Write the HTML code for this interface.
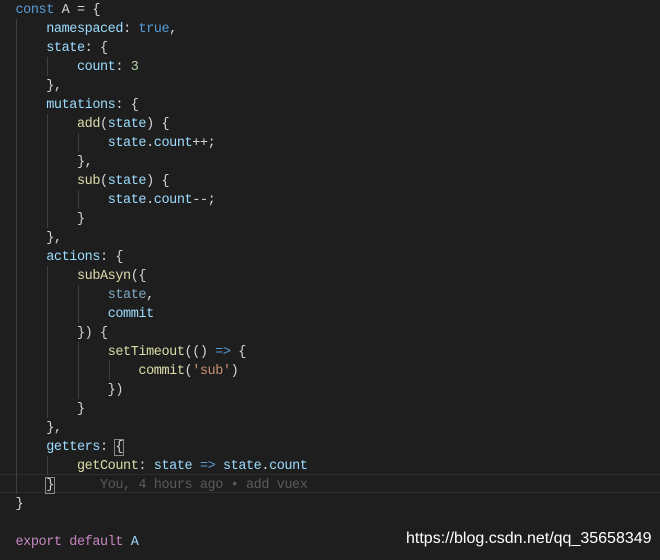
<!DOCTYPE html>
<html><head><meta charset="utf-8"><style>
html,body{margin:0;padding:0;background:#1e1e1e;width:660px;height:560px;overflow:hidden}
#c{position:absolute;left:15.5px;top:1px;font-family:"Liberation Mono",monospace;font-size:13.5px;letter-spacing:-0.42px;line-height:19px;color:#d4d4d4;white-space:pre}
.k{color:#569cd6}.p{color:#9cdcfe}.n{color:#b5cea8}.f{color:#dcdcaa}.e{color:#c586c0}.s{color:#ce9178}.d{color:#7fa9c0}.g{color:#5a5a5a}
.gd{position:absolute;width:1px;background:#404040}
.hl{position:absolute;left:0;width:660px;top:474px;height:17px;border-top:1px solid #2e2e2e;border-bottom:1px solid #2e2e2e}
.bx{outline:1px solid #888;}
#w{position:absolute;left:406px;top:530px;font-family:"Liberation Sans",sans-serif;font-size:16px;color:#fff}
</style></head><body>
<div class="hl"></div>
<div class="gd" style="left:16px;top:19px;height:475px"></div>
<div class="gd" style="left:47px;top:57px;height:19px"></div>
<div class="gd" style="left:47px;top:114px;height:114px"></div>
<div class="gd" style="left:78px;top:133px;height:19px"></div>
<div class="gd" style="left:78px;top:190px;height:19px"></div>
<div class="gd" style="left:47px;top:266px;height:152px"></div>
<div class="gd" style="left:78px;top:285px;height:38px"></div>
<div class="gd" style="left:78px;top:342px;height:57px"></div>
<div class="gd" style="left:109px;top:361px;height:19px"></div>
<div class="gd" style="left:47px;top:456px;height:19px"></div>
<div id="c"><span class="k">const</span> A = {
    <span class="p">namespaced</span>: <span class="k">true</span>,
    <span class="p">state</span>: {
        <span class="p">count</span>: <span class="n">3</span>
    },
    <span class="p">mutations</span>: {
        <span class="f">add</span>(<span class="p">state</span>) {
            <span class="p">state</span>.<span class="p">count</span>++;
        },
        <span class="f">sub</span>(<span class="p">state</span>) {
            <span class="p">state</span>.<span class="p">count</span>--;
        }
    },
    <span class="p">actions</span>: {
        <span class="f">subAsyn</span>({
            <span class="d">state</span>,
            <span class="p">commit</span>
        }) {
            <span class="f">setTimeout</span>(() <span class="k">=&gt;</span> {
                <span class="f">commit</span>(<span class="s">'sub'</span>)
            })
        }
    },
    <span class="p">getters</span>: <span class="bx">{</span>
        <span class="f">getCount</span>: <span class="p">state</span> <span class="k">=&gt;</span> <span class="p">state</span>.<span class="p">count</span>
    <span class="bx">}</span>      <span class="g">You, 4 hours ago • add vuex</span>
}

<span class="e">export</span> <span class="e">default</span> <span class="p">A</span></div>
<div id="w">https://blog.csdn.net/qq_35658349</div>
</body></html>
